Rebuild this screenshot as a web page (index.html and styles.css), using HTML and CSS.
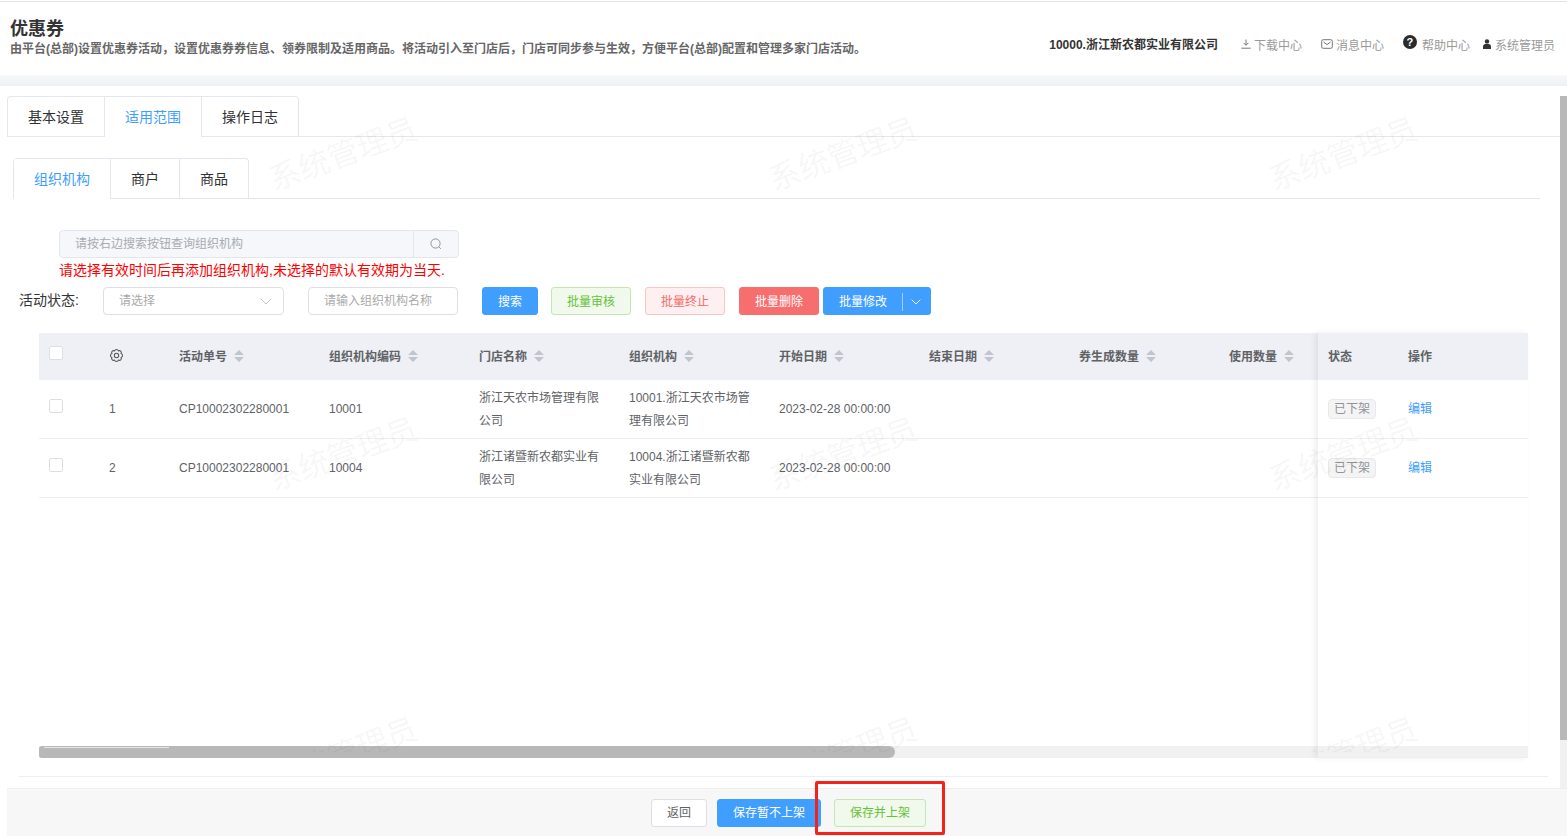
FILE: index.html
```html
<!DOCTYPE html>
<html lang="zh-CN">
<head>
<meta charset="utf-8">
<title>优惠券</title>
<link rel="stylesheet" href="styles.css">
</head>
<body>
<header class="top">
  <div class="top-left">
    <h1 class="title">优惠券</h1>
    <p class="desc">由平台(总部)设置优惠券活动，设置优惠券券信息、领券限制及适用商品。将活动引入至门店后，门店可同步参与生效，方便平台(总部)配置和管理多家门店活动。</p>
  </div>
  <div class="top-right">
    <span class="company">10000.浙江新农都实业有限公司</span>
    <a class="tool tool-dl"><svg class="ic" width="10" height="10" viewBox="0 0 10 10"><path d="M5 .5v5.6M2.6 3.9 5 6.3l2.4-2.4M.4 9.2h9.2" fill="none" stroke="#777" stroke-width="1"/></svg>下载中心</a>
    <a class="tool tool-msg"><svg class="ic" width="12" height="10" viewBox="0 0 12 10"><rect x=".7" y=".7" width="10.6" height="8.6" rx="1.5" fill="none" stroke="#777"/><path d="M2.5 3 6 5.6 9.5 3" fill="none" stroke="#777"/></svg>消息中心</a>
    <a class="tool tool-help"><span class="help-dot">?</span>帮助中心</a>
    <a class="tool tool-user"><svg class="ic" width="8" height="10" viewBox="0 0 8 10"><circle cx="4" cy="2.4" r="2.2" fill="#333"/><path d="M0 10V7.4C0 5.6 1.4 4.8 4 4.8s4 .8 4 2.6V10z" fill="#333"/></svg>系统管理员</a>
  </div>
</header>
<div class="band"></div>

<main class="main">
  <div class="scroll-area">
    <div class="content">
      <div class="tabs">
        <div class="tab-nav">
          <span class="tab">基本设置</span>
          <span class="tab active">适用范围</span>
          <span class="tab">操作日志</span>
        </div>
      </div>
      <div class="panel">
        <div class="tabs">
          <div class="tab-nav">
            <span class="tab active">组织机构</span>
            <span class="tab">商户</span>
            <span class="tab">商品</span>
          </div>
        </div>
        <div class="search-box">
          <span class="search-text">请按右边搜索按钮查询组织机构</span>
          <span class="search-btn"><svg width="12" height="12" viewBox="0 0 12 12"><circle cx="5.5" cy="5.5" r="4.6" fill="none" stroke="#909399"/><path d="m8.8 8.8 2 2" stroke="#909399"/></svg></span>
        </div>
        <p class="warn">请选择有效时间后再添加组织机构,未选择的默认有效期为当天.</p>
        <div class="filters">
          <label class="f-label">活动状态:</label>
          <div class="select"><span class="select-text">请选择</span><svg width="12" height="7" viewBox="0 0 12 7"><path d="m.7.7 5.3 5.3L11.300.7" fill="none" stroke="#c0c4cc"/></svg></div>
          <div class="input">请输入组织机构名称</div>
          <button class="btn primary b-search">搜索</button>
          <button class="btn green b-audit">批量审核</button>
          <button class="btn pink b-stop">批量终止</button>
          <button class="btn red b-del">批量删除</button>
          <button class="btn primary b-edit"><span class="b-edit-label">批量修改</span><span class="b-edit-caret"><svg width="10" height="6" viewBox="0 0 10 6"><path d="m.7.7 4.300 4.300L9.300.7" fill="none" stroke="#fff"/></svg></span></button>
        </div>

        <div class="table-wrap">
          <div class="table-scroll">
            <table class="grid">
              <thead>
                <tr>
                  <th class="c-check"><span class="check"></span></th>
                  <th class="c-idx"><svg class="gear" width="15" height="15" viewBox="0 0 24 24"><path d="M19.390 8.940A3.200 3.200 0 0 1 19.390 15.060A3.200 3.200 0 0 1 15.060 19.390A3.200 3.200 0 0 1 8.940 19.390A3.200 3.200 0 0 1 4.610 15.060A3.200 3.200 0 0 1 4.610 8.940A3.200 3.200 0 0 1 8.940 4.610A3.200 3.200 0 0 1 15.060 4.610A3.200 3.200 0 0 1 19.390 8.940Z" fill="none" stroke="#555" stroke-width="1.700"/><circle cx="12" cy="12" r="3.500" fill="none" stroke="#555" stroke-width="1.700"/></svg></th>
                  <th class="c-data"><span class="th-s">活动单号<svg class="sort" width="10" height="12" viewBox="0 0 10 12"><path d="M5 0l5 5H0zM5 12 0 7h10z" fill="#c0c4cc"/></svg></span></th>
                  <th class="c-data"><span class="th-s">组织机构编码<svg class="sort" width="10" height="12" viewBox="0 0 10 12"><path d="M5 0l5 5H0zM5 12 0 7h10z" fill="#c0c4cc"/></svg></span></th>
                  <th class="c-data"><span class="th-s">门店名称<svg class="sort" width="10" height="12" viewBox="0 0 10 12"><path d="M5 0l5 5H0zM5 12 0 7h10z" fill="#c0c4cc"/></svg></span></th>
                  <th class="c-data"><span class="th-s">组织机构<svg class="sort" width="10" height="12" viewBox="0 0 10 12"><path d="M5 0l5 5H0zM5 12 0 7h10z" fill="#c0c4cc"/></svg></span></th>
                  <th class="c-data"><span class="th-s">开始日期<svg class="sort" width="10" height="12" viewBox="0 0 10 12"><path d="M5 0l5 5H0zM5 12 0 7h10z" fill="#c0c4cc"/></svg></span></th>
                  <th class="c-data"><span class="th-s">结束日期<svg class="sort" width="10" height="12" viewBox="0 0 10 12"><path d="M5 0l5 5H0zM5 12 0 7h10z" fill="#c0c4cc"/></svg></span></th>
                  <th class="c-data"><span class="th-s">券生成数量<svg class="sort" width="10" height="12" viewBox="0 0 10 12"><path d="M5 0l5 5H0zM5 12 0 7h10z" fill="#c0c4cc"/></svg></span></th>
                  <th class="c-data"><span class="th-s">使用数量<svg class="sort" width="10" height="12" viewBox="0 0 10 12"><path d="M5 0l5 5H0zM5 12 0 7h10z" fill="#c0c4cc"/></svg></span></th>
                </tr>
              </thead>
              <tbody>
                <tr>
                  <td><span class="check"></span></td><td>1</td><td>CP10002302280001</td><td>10001</td>
                  <td class="multi">浙江天农市场管理有限公司</td><td class="multi">10001.浙江天农市场管理有限公司</td><td>2023-02-28 00:00:00</td><td></td><td></td><td></td>
                </tr>
                <tr>
                  <td><span class="check"></span></td><td>2</td><td>CP10002302280001</td><td>10004</td>
                  <td class="multi">浙江诸暨新农都实业有限公司</td><td class="multi">10004.浙江诸暨新农都实业有限公司</td><td>2023-02-28 00:00:00</td><td></td><td></td><td></td>
                </tr>
              </tbody>
            </table>
            <div class="spacer"></div>
            <div class="hbar"><div class="hthumb"></div></div>
          </div>
          <div class="fixed">
            <table class="grid grid-fixed">
              <thead><tr><th class="c-status">状态</th><th>操作</th></tr></thead>
              <tbody>
                <tr><td><span class="tag">已下架</span></td><td><a class="link">编辑</a></td></tr>
                <tr><td><span class="tag">已下架</span></td><td><a class="link">编辑</a></td></tr>
              </tbody>
            </table>
            <div class="spacer"></div>
            <div class="fixed-track"></div>
          </div>
        </div>
      </div>
      <div class="rule"></div>
    </div>
    <div class="vbar"><div class="vthumb"></div></div>
  </div>
  <footer class="foot">
    <button class="btn plain b-back">返回</button>
    <button class="btn primary b-save">保存暂不上架</button>
    <button class="btn green b-pub">保存并上架</button>
    <span class="mark"></span>
  </footer>
  <div class="wm-layer" aria-hidden="true">
    <span class="wm">系统管理员</span><span class="wm">系统管理员</span><span class="wm">系统管理员</span>
    <span class="wm">系统管理员</span><span class="wm">系统管理员</span><span class="wm">系统管理员</span>
    <span class="wm">系统管理员</span><span class="wm">系统管理员</span><span class="wm">系统管理员</span>
  </div>
</main>
</body>
</html>
```
FILE: styles.css
```css
* { box-sizing: border-box; }
html, body { margin: 0; padding: 0; height: 836px; overflow: hidden; background: #fff; }
body { font-family: "Liberation Sans", "Noto Sans CJK SC", sans-serif; font-size: 12px; color: #606266; position: relative; }

/* header */
.top { height: 74px; border-top: 1px solid #e2e2e2; margin-top: 1px; display: flex; justify-content: space-between; padding: 0 12px 0 10px; }
.title { margin: 15px 0 0; font-size: 18px; line-height: 24px; font-weight: 700; color: #333; }
.desc { margin: -1px 0 0; font-size: 12px; line-height: 18px; font-weight: 700; color: #666; }
.top-right { display: flex; align-items: center; margin-top: -1px; height: 86px; }
.company { font-weight: 700; color: #333; margin: 0 23px 2px 0; }
.tool { display: inline-flex; align-items: center; color: #999; }
.ic { margin-right: 3px; flex: none; }
.tool-dl { margin-right: 19px; }
.tool-msg { margin-right: 19px; }
.tool-help { margin-right: 13px; }
.tool-user .ic { margin-right: 4px; }
.help-dot { width: 14px; height: 14px; border-radius: 50%; background: #2b2b2b; color: #fff; font-size: 11px; line-height: 14px; font-weight: 700; text-align: center; margin-right: 5px; position: relative; top: -2px; }
.band { height: 11px; background: linear-gradient(#f7f8f9, #eff0f2); }

/* main */
.main { height: 750px; padding-left: 7px; display: flex; flex-direction: column; }
.scroll-area { height: 702px; display: flex; padding-top: 10px; }
.content { flex: 1; min-width: 0; }
.vbar { width: 7px; background: #f1f1f1; }
.vthumb { height: 644px; background: #b8b8b8; }

/* tabs */
.tabs { height: 41px; border-bottom: 1px solid #e4e7ed; }
.tab-nav { display: inline-flex; height: 41px; border: 1px solid #e4e7ed; border-bottom: 0; border-radius: 4px 4px 0 0; }
.tab { height: 40px; padding: 0 20px; line-height: 40px; font-size: 14px; color: #303133; border-left: 1px solid #e4e7ed; }
.tab:first-child { border-left: 0; }
.tab.active { color: #409eff; background: #fff; }

.panel { margin: 21px 20px 0 6px; }

/* search */
.search-box { width: 400px; height: 28px; margin: 31px 0 0 46px; display: flex; background: #f5f7fa; border: 1px solid #e4e7ed; border-radius: 4px; }
.search-text { flex: 1; padding-left: 15px; line-height: 26px; color: #a8abb2; }
.search-btn { width: 45px; border-left: 1px solid #e4e7ed; display: flex; align-items: center; justify-content: center; }
.warn { margin: 0 0 5px 46px; font-size: 14px; line-height: 24px; color: #f00; }

/* filters */
.filters { display: flex; align-items: center; height: 28px; padding-left: 6px; }
.f-label { width: 84px; font-size: 14px; line-height: 20px; margin-bottom: 3px; color: #333; }
.select { width: 181px; height: 28px; padding: 0 11px 0 15px; border: 1px solid #dcdfe6; border-radius: 4px; display: flex; align-items: center; justify-content: space-between; color: #aaa; }
.select-text { line-height: 26px; }
.input { width: 150px; height: 28px; margin: 0 24px; padding-left: 15px; border: 1px solid #dcdfe6; border-radius: 4px; line-height: 26px; color: #aaa; }

.btn { height: 28px; padding: 0; border: 1px solid transparent; border-radius: 3px; font: inherit; font-size: 12px; line-height: 18px; cursor: pointer; display: flex; align-items: center; justify-content: center; }
.filters .btn { padding-top: 2px; }
.primary { background: #409eff; border-color: #409eff; color: #fff; }
.green { background: #f0f9eb; border-color: #c2e7b0; color: #67c23a; }
.pink { background: #fef0f0; border-color: #fbc4c4; color: #f56c6c; }
.red { border-color: #f76e6e; color: #fff; background: #f76e6e; }
.plain { background: #fff; border-color: #dcdfe6; color: #606266; }
.b-search { width: 56px; margin-right: 13px; }
.b-audit, .b-stop { width: 80px; margin-right: 14px; }
.b-del { width: 80px; margin-right: 4px; }
.b-edit { width: 108px; }
.b-edit-label { width: 79px; text-align: center; line-height: 18px; border-right: 1px solid #a5cff9; }
.b-edit-caret { flex: 1; display: flex; justify-content: center; padding-right: 2px; }

/* table */
.table-wrap { position: relative; margin: 18px 12px 0 26px; height: 425px; }
.table-scroll { height: 425px; overflow: hidden; display: flex; flex-direction: column; }
.spacer { flex: 1; }
.grid { table-layout: fixed; width: 1330px; border-collapse: separate; border-spacing: 0; }
.grid th { height: 47px; padding: 0 10px 2px; background: #eef0f5; text-align: left; font-weight: 700; font-size: 12px; color: #606266; }
.grid td { height: 59px; padding: 0 10px; line-height: 23px; font-size: 12px; color: #606266; border-bottom: 1px solid #ebeef5; vertical-align: middle; }
.grid td.multi { padding-top: 2px; }
.c-check { width: 60px; }
.c-idx { width: 70px; }
.c-data { width: 150px; }
.check { display: block; width: 14px; height: 14px; margin-bottom: 6px; background: #fff; border: 1px solid #dcdfe6; border-radius: 2px; }
.gear { display: block; }
.th-s { display: inline-flex; align-items: center; white-space: nowrap; }
.sort { margin-left: 7px; }
.hbar { height: 12px; background: #f1f1f1; flex: none; }
.hthumb { position: relative; width: 856px; height: 12px; background: #b8b8b8; border-radius: 3px 6px 6px 3px; }
.hthumb::after { content: ""; position: absolute; left: 5px; top: 1px; width: 125px; height: 1px; background: #e6e6e6; }

.fixed { position: absolute; right: 0; top: 0; bottom: 0; width: 210px; background: #fff; display: flex; flex-direction: column; box-shadow: -3px 0 6px rgba(0, 0, 0, .07); }
.grid-fixed { width: 210px; }
.c-status { width: 80px; }
.fixed-track { height: 12px; background: #f1f1f1; border-bottom: 1px solid #ebeef5; }
.tag { display: inline-block; height: 20px; padding: 0 5px; line-height: 18px; color: #909399; background: #f4f4f5; border: 1px solid #e9e9eb; border-radius: 4px; }
.link { color: #409eff; }

.rule { margin: 18px 12px 0 12px; height: 1px; background: #ebeef5; }

/* footer */
.foot { position: relative; height: 48px; background: #f7f7f7; border-top: 1px solid #eee; display: flex; padding: 10px 0 0 644px; }
.b-back { width: 56px; margin-right: 10px; }
.b-save { width: 104px; margin-right: 13px; }
.b-pub { width: 92px; }
.mark { position: absolute; left: 808px; top: -8px; width: 130px; height: 54px; border: 3px solid #f5211b; border-radius: 2px; }

/* watermark */
.wm-layer { position: absolute; left: 93px; top: 5px; width: 1474px; height: 747px; overflow: hidden; display: grid; grid-template-columns: repeat(3, 500px); grid-auto-rows: 300px; pointer-events: none; }
.wm { align-self: center; justify-self: center; font-size: 31px; line-height: 36px; color: rgba(0, 0, 0, .05); transform: rotate(-20deg); white-space: nowrap; }
```
